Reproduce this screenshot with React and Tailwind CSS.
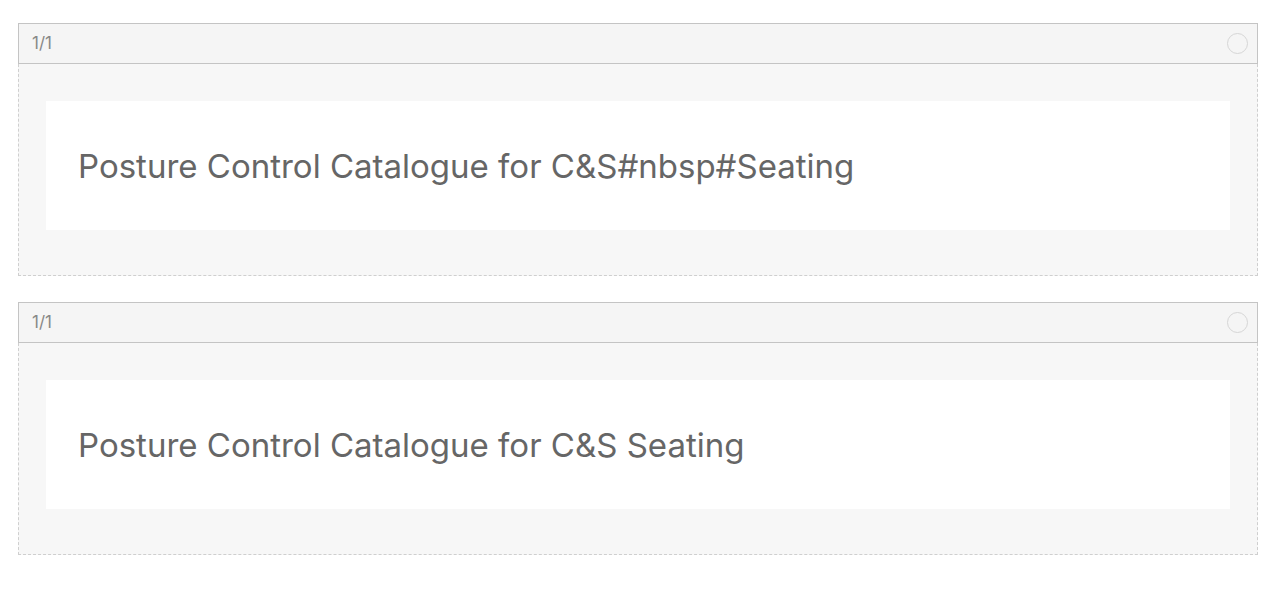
import React from 'react';

function Card({ title }) {
  return (
    <div className="w-[1240px]">
      {/* Header */}
      <div className="flex items-center justify-between h-[41px] border border-[#c4c4c4] bg-[#f5f5f5] pl-[13px] pr-[9px]">
        <span className="text-[17px] text-[#888888]">1/1</span>
        <span className="w-[21px] h-[21px] rounded-full border border-[#d6d6d6]"></span>
      </div>
      {/* Body */}
      <div className="border border-t-0 border-dashed border-[#cfcfcf] bg-[#f7f7f7] pt-[37px] pb-[45px] px-[27px]">
        <div className="bg-white h-[129px] flex items-center pl-[32px]">
          <span className="text-[33px] text-[#666666] pt-[2px]">{title}</span>
        </div>
      </div>
    </div>
  );
}

export default function App() {
  return (
    <div className="min-h-[594px] bg-white pt-[23px] pl-[18px] flex flex-col gap-[26px]" style={{ fontFamily: 'Inter, "Noto Sans", sans-serif' }}>
      <Card title="Posture Control Catalogue for C&S#nbsp#Seating" />
      <Card title="Posture Control Catalogue for C&S Seating" />
    </div>
  );
}
